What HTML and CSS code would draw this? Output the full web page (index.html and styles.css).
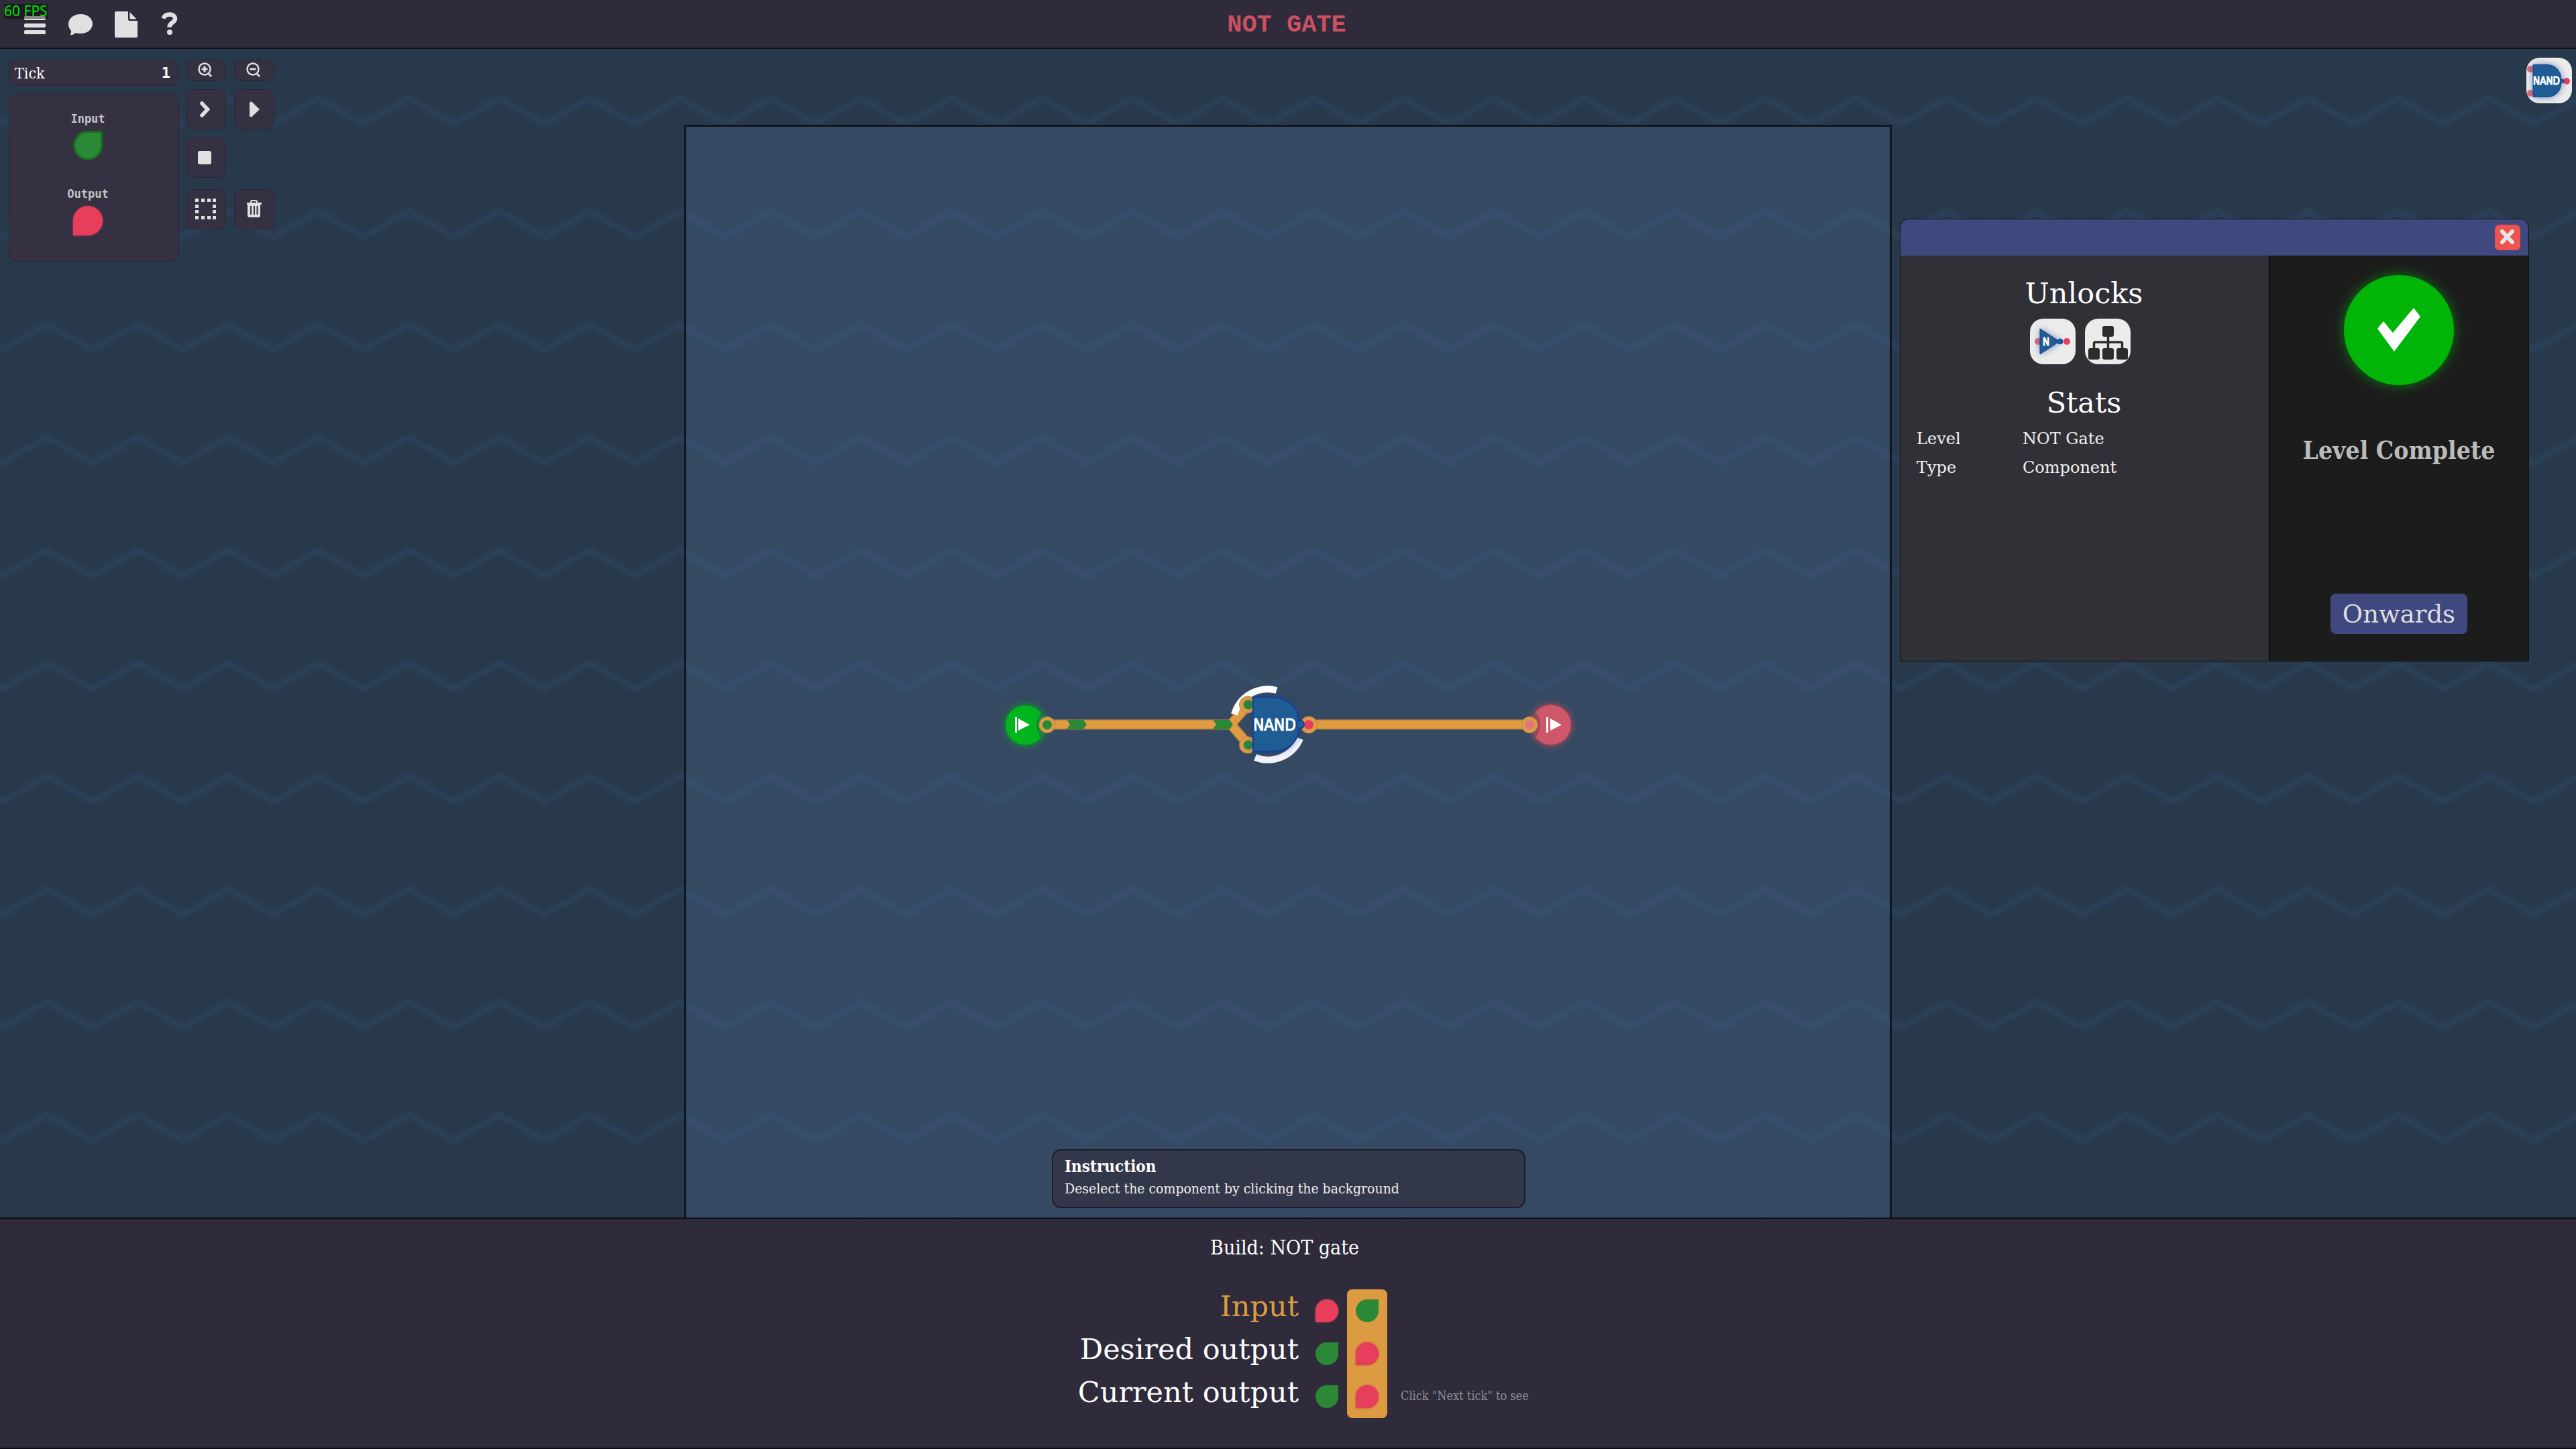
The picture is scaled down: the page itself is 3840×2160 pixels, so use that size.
FILE: index.html
```html
<!DOCTYPE html>
<html lang="en">
<head>
<meta charset="utf-8">
<title>NOT Gate</title>
<link rel="stylesheet" href="styles.css">
</head>
<body>
<header class="topbar">
  <nav class="menu" aria-label="Main">
    <button class="icon-btn" aria-label="Menu"><svg width="34" height="40" viewBox="0 0 34 40"><g fill="#e0e0e0"><rect x="1" y="7" width="32" height="6" rx="2"/><rect x="1" y="18" width="32" height="6" rx="2"/><rect x="1" y="28" width="32" height="6" rx="2"/></g></svg></button>
    <button class="icon-btn" aria-label="Chat"><svg width="38" height="40" viewBox="0 0 38 40"><path fill="#e0e0e0" d="M19 4C9 4 1 10.500 1 19c0 4 1.500 7 4 9.500C5 31 4.500 33.500 4 35.500c3 0 6-2 7.500-3.500 2 .7 4.700 1 7.500 1 10 0 18-6 18-14.500S29 4 19 4z"/></svg></button>
    <button class="icon-btn" aria-label="Notes"><svg width="36" height="40" viewBox="0 0 36 40"><path fill="#e0e0e0" d="M3 0H20V12q0 2 2 2H34V37q0 2-2 2H2q-2 0-2-2V2Q0 0 2 0zM22.500 1L32.500 11.500H22.500z"/></svg></button>
    <button class="icon-btn" aria-label="Help"><svg width="26" height="40" viewBox="0 0 26 40"><path fill="none" stroke="#e0e0e0" stroke-width="6.500" d="M4.500 10.500C6 6 9.500 4.500 14 4.500c5 0 8 2.800 8 6.500 0 6-8.500 5.500-8.500 12.500"/><circle cx="14" cy="31" r="4" fill="#e0e0e0"/></svg></button>
  </nav>
  <h1 class="level-title">NOT GATE</h1>
</header>
<div class="fps">60 FPS</div>

<main class="stage">
  <svg class="waves" aria-hidden="true">
    <defs>
      <pattern id="zigzag" patternUnits="userSpaceOnUse" x="3" y="0" width="134.800" height="168.400">
        <path d="M-67.400 73.600L0 111.600L67.400 73.600L134.800 111.600L202.200 73.600" fill="none" stroke="#263a4a" stroke-width="34" opacity=".3"/>
        <path d="M-67.400 73.600L0 111.600L67.400 73.600L134.800 111.600L202.200 73.600" fill="none" stroke="#293c52" stroke-width="13"/>
        <path d="M-67.400 73.600L0 111.600L67.400 73.600L134.800 111.600L202.200 73.600" fill="none" stroke="#2b3f57" stroke-width="8"/>
      </pattern>
    </defs>
    <rect width="100%" height="100%" fill="url(#zigzag)"/>
  </svg>
  <div class="board"></div>

  <svg class="circuit" width="880" height="140" viewBox="1480 1010 880 140" role="img" aria-label="Circuit">
    <defs>
      <filter id="glow" x="-50%" y="-50%" width="200%" height="200%"><feGaussianBlur stdDeviation="5"/></filter>
    </defs>
    <g stroke="#b98136" stroke-width="15" fill="none"><path d="M1565 1080H1835L1860 1051M1835 1080L1860 1109M1950 1080H2280"/></g>
    <g stroke="#e09c43" stroke-width="12" fill="none"><path d="M1565 1080H1835L1860 1051M1835 1080L1860 1109M1950 1080H2280"/></g>
    <g fill="#2a8836"><path d="M1590 1073H1615L1620 1080L1615 1087H1590L1595 1080z"/><path d="M1808 1073H1833L1838 1080L1833 1087H1808L1813 1080z"/></g>
    <path d="M1840 1065A52 52 0 0 1 1903 1029" fill="none" stroke="#fff" stroke-width="10"/>
    <path d="M1871 1129A52 52 0 0 0 1938 1101" fill="none" stroke="#f2f3f9" stroke-width="10"/>
    <g fill="#dd9b48" stroke="#bb8542"><circle cx="1860" cy="1050.500" r="12.500"/><circle cx="1860" cy="1110.500" r="12.500"/><circle cx="1951" cy="1080.500" r="12.500"/></g>
    <g fill="#2a8836"><circle cx="1860.500" cy="1050.500" r="7"/><circle cx="1860.500" cy="1110.500" r="7"/></g>
    <circle cx="1951" cy="1080.500" r="7" fill="#e73e5c"/>
    <path d="M1868 1039H1896C1922 1039 1937 1056 1937 1080S1922 1121 1896 1121H1868z" fill="#1c3f90" filter="url(#glow)" opacity=".55"/>
    <path d="M1868 1039.500H1896C1922 1039.500 1937 1056 1937 1080S1922 1120.500 1896 1120.500H1868z" fill="#1f5c94" stroke="#173f95" stroke-width="2"/>
    <circle cx="1938" cy="1080" r="6" fill="#1f5c94" stroke="#173f95" stroke-width="2"/>
    <text class="gate-name" x="1900" y="1089" text-anchor="middle">NAND</text>
    <circle cx="1529" cy="1081" r="31" fill="#00c020" filter="url(#glow)" opacity=".6"/>
    <path d="M1552.500 1063A30 30 0 1 0 1552.500 1099A28 28 0 0 1 1552.500 1063z" fill="#02b41e" stroke="#0b7c1e"/>
    <path d="M1513 1069h3v23h-3zM1518 1071L1535 1080.500L1518 1089z" fill="#fff"/>
    <circle cx="2312" cy="1080.500" r="31" fill="#e8505f" filter="url(#glow)" opacity=".6"/>
    <path d="M2288.500 1062A30 30 0 1 1 2288.500 1099A28 28 0 0 0 2288.500 1062z" fill="#ce5769" stroke="#a83e4c"/>
    <circle cx="2280" cy="1080.500" r="12" fill="#dd9b48" stroke="#bb8542"/><circle cx="2280" cy="1080.500" r="7" fill="#e0777a"/>
    <circle cx="1561" cy="1080.500" r="12" fill="#dd9b48" stroke="#bb8542"/><circle cx="1561" cy="1080.500" r="7" fill="#2a8836"/>
    <path d="M2305 1069h3v23h-3zM2311 1071L2328 1080.500L2311 1089z" fill="#fff"/>
  </svg>

  <section class="tools" aria-label="Simulation">
    <div class="readouts">
      <div class="tick"><span>Tick</span><b>1</b></div>
      <div class="signals">
        <span class="signal-name">Input</span>
        <i class="leaf on large"></i>
        <span class="signal-name second">Output</span>
        <i class="leaf off large"></i>
      </div>
    </div>
    <div class="buttons">
      <button class="tool" aria-label="Zoom in"><svg width="24" height="24" viewBox="0 0 24 24" fill="none" stroke="#dedede"><circle cx="10" cy="10" r="8.500" stroke-width="2.500"/><path stroke-width="3" d="M16 17L20 21M5.500 10h9M10 5.500v9"/></svg></button>
      <button class="tool" aria-label="Zoom out"><svg width="24" height="24" viewBox="0 0 24 24" fill="none" stroke="#dedede"><circle cx="10" cy="10" r="8.500" stroke-width="2.500"/><path stroke-width="3" d="M16 17L20 21M5.500 10h9"/></svg></button>
      <button class="tool" aria-label="Next tick"><svg width="24" height="24" viewBox="0 0 24 24"><path d="M6 3L14.500 12L6 21" fill="none" stroke="#e0e0e0" stroke-width="5.500" stroke-linecap="round"/></svg></button>
      <button class="tool" aria-label="Run"><svg width="24" height="24" viewBox="0 0 24 24"><path d="M5 3q0-3 3-2.500L20 12L8 23.500Q5 24 5 21z" fill="#e0e0e0"/></svg></button>
      <button class="tool" aria-label="Stop"><svg width="24" height="24" viewBox="0 0 24 24"><rect x="0" y="2" width="20" height="20" rx="3" fill="#e0e0e0"/></svg></button>
      <button class="tool row-end" aria-label="Select area"><svg width="32" height="32" viewBox="0 0 32 32" fill="#e0e0e0"><path d="M0 0h5v5H0zM9 0h5v5H9zM18 0h5v5H18zM26 0h5v5H26zM0 9h5v5H0zM26 9h5v5H26zM0 17h5v5H0zM26 17h5v5H26zM0 26h5v5H0zM9 26h5v5H9zM18 26h5v5H18zM26 26h5v5H26z"/></svg></button>
      <button class="tool" aria-label="Delete"><svg width="24" height="28" viewBox="0 0 24 28"><path d="M7 5V3q0-2 2-2h5q2 0 2 2v2" fill="none" stroke="#e0e0e0" stroke-width="2"/><path fill="#e0e0e0" fill-rule="evenodd" d="M1 4H23V7H21V23q0 3-3 3H5q-3 0-3-3V7H1zM6 9v13h2V9zM11 9v13h2V9zM15.500 9v13h2V9z"/></svg></button>
    </div>
  </section>

  <button class="tile" aria-label="NAND component">
    <svg width="68" height="68" viewBox="0 0 68 68">
      <circle cx="6" cy="17" r="5" fill="#dc6e78"/><circle cx="6" cy="53" r="5" fill="#dc6e78"/><circle cx="60" cy="35" r="5" fill="#e73e5c"/>
      <path d="M10 10H30C44 10 53 20 53 35S44 59 30 59H10z" fill="#1c3f90" filter="url(#glow)" opacity=".6"/>
      <path d="M10 10.500H30C44 10.500 52 20 52 35S44 58.500 30 58.500H10z" fill="#1f5c94" stroke="#173f95"/>
      <circle cx="53" cy="35" r="3" fill="#1f5c94" stroke="#173f95"/>
      <text class="tile-name" x="30" y="40" text-anchor="middle">NAND</text>
    </svg>
  </button>

  <section class="dialog" role="dialog" aria-label="Level Complete">
    <div class="dialog-bar"><button class="close" aria-label="Close"><svg width="26" height="26" viewBox="0 0 26 26"><path d="M5 4L20 20M20 4L5 20" stroke="#e6e6e6" stroke-width="6" stroke-linecap="round"/></svg></button></div>
    <div class="dialog-body">
      <div class="details">
        <h2>Unlocks</h2>
        <div class="unlocks">
          <span class="tile"><svg width="68" height="68" viewBox="0 0 68 68">
            <circle cx="12" cy="34" r="5" fill="#dc6e78"/><circle cx="55" cy="34" r="5" fill="#e73e5c"/>
            <path d="M15 15L46 34L15 53z" fill="#1c3f90" filter="url(#glow)" opacity=".6"/>
            <path d="M15 15L44 34L15 53z" fill="#1f5c94" stroke="#173f95"/>
            <circle cx="45" cy="34" r="4" fill="#1f5c94" stroke="#173f95"/>
            <text class="tile-name" x="24" y="40" text-anchor="middle">N</text>
          </svg></span>
          <span class="tile"><svg width="68" height="68" viewBox="0 0 68 68" fill="#2c2c2c">
            <rect x="26" y="11" width="17" height="16" rx="3"/><rect x="5" y="44" width="17" height="17" rx="3"/><rect x="26" y="44" width="17" height="17" rx="3"/><rect x="47" y="44" width="17" height="17" rx="3"/>
            <path d="M34.500 26V45M13.500 45V37q0-2 2-2H53.500q2 0 2 2V45" fill="none" stroke="#2c2c2c" stroke-width="3.500"/>
          </svg></span>
        </div>
        <h2>Stats</h2>
        <dl class="stats"><dt>Level</dt><dd>NOT Gate</dd><dt>Type</dt><dd>Component</dd></dl>
      </div>
      <div class="result">
        <div class="medal"><svg width="66" height="66" viewBox="0 0 66 66"><path fill="#fff" d="M1 31L10 20L24 37L55 0L65 13L26 65z"/></svg></div>
        <h3>Level Complete</h3>
        <button class="onwards">Onwards</button>
      </div>
    </div>
  </section>

  <aside class="instruction"><strong>Instruction</strong><p>Deselect the component by clicking the background</p></aside>
</main>

<footer class="goal">
  <h2>Build: NOT gate</h2>
  <table>
    <tr class="given"><th scope="row">Input</th><td><i class="leaf off"></i></td><td class="current first"><i class="leaf on"></i></td><td class="hint"></td></tr>
    <tr><th scope="row">Desired output</th><td><i class="leaf on"></i></td><td class="current"><i class="leaf off"></i></td><td class="hint"></td></tr>
    <tr><th scope="row">Current output</th><td><i class="leaf on"></i></td><td class="current last"><i class="leaf off"></i></td><td class="hint">Click "Next tick" to see</td></tr>
  </table>
</footer>
</body>
</html>
```
FILE: styles.css
```css
* { box-sizing: border-box; }
body {
  margin: 0;
  min-height: 100vh;
  display: flex;
  flex-direction: column;
  background: #2f2b3b;
  color: #fff;
  font-family: "DejaVu Serif", serif;
}
h1, h2, h3, p, dl, dd { margin: 0; font-weight: normal; }
button { font: inherit; color: inherit; border: 0; padding: 0; background: none; }
svg { display: block; }

.topbar {
  display: grid;
  grid-template-columns: 1fr auto 1fr;
  align-items: center;
  height: 73px;
  padding: 3px 39px 0 35px;
  border-bottom: 2px solid #0c0c12;
}
.menu { display: flex; gap: 32px; align-items: center; }
.level-title { font: bold 37px/40px "Liberation Mono", monospace; color: #cb5062; }
.fps {
  position: absolute;
  left: 6px;
  top: 6px;
  height: 22px;
  font: 21px/21px "Noto Sans", sans-serif;
  color: #00e400;
  background: rgba(0, 0, 0, .4);
}

.stage {
  position: relative;
  flex: 1;
  display: flex;
  justify-content: space-between;
  align-items: flex-start;
  padding: 13px 6px 0 13px;
  background: #28394b;
  overflow: hidden;
}
.waves { position: absolute; inset: 0; width: 100%; height: 100%; }
.board {
  position: absolute;
  inset: 113px 0 0;
  width: 46.875%;
  margin: 0 auto;
  border: solid #11161c;
  border-width: 3px 3px 0;
  background: rgba(127, 177, 235, .15);
}
.circuit { position: absolute; left: calc(50% - 440px); top: 937px; }
.gate-name { font: 24px "DejaVu Sans Condensed", sans-serif; fill: #fff; stroke: #fff; stroke-width: 1px; }
.tile-name { font: 15px "DejaVu Sans Condensed", sans-serif; fill: #fff; stroke: #fff; stroke-width: 1px; }

.tools { position: relative; display: flex; gap: 10px; padding-top: 3px; }
.readouts { display: flex; flex-direction: column; gap: 12px; width: 254px; }
.tick, .signals, .tool { background: #363142; border: 1px solid #262736; border-radius: 12px; }
.tick { display: flex; justify-content: space-between; align-items: center; height: 39px; padding: 0 12px 0 8px; font: 23px "DejaVu Serif Condensed", "DejaVu Serif", serif; }
.tick b { font: bold 22px "DejaVu Sans Mono", monospace; }
.signals { display: flex; flex-direction: column; align-items: center; gap: 8px; height: 250px; padding: 26px 18px 0 0; }
.signal-name { font: bold 17px/20px "DejaVu Sans Mono", monospace; color: #c4c4c6; }
.second { margin-top: 32px; }
.buttons { display: grid; grid-template-columns: 60px 60px; grid-template-rows: 32px 60px 60px 60px; gap: 12px; }
.tool { display: flex; align-items: center; justify-content: center; }
.row-end { grid-column: 1; }
.buttons .tool:nth-child(n+6) { margin-top: 5px; margin-bottom: -5px; }

.leaf { display: block; width: 34px; height: 34px; }
.on { background: #2a8836; border-radius: 50% 0 50% 50%; }
.off { background: #e73e5c; border-radius: 50% 50% 50% 0; box-shadow: 0 0 3px #c03850; }
.large { width: 44px; height: 44px; }
.on.large { border: 3px solid #156f1e; }

.tile { position: relative; width: 68px; height: 68px; border-radius: 20px; background: #ebebeb; overflow: hidden; }

.dialog {
  position: absolute;
  right: 70px;
  top: 253px;
  width: 938px;
  border: 1px solid #111;
  border-radius: 14px 14px 0 0;
  overflow: hidden;
}
.dialog-bar { display: flex; justify-content: flex-end; align-items: center; height: 54px; padding: 0 12px; background: #40497f; }
.close { display: grid; place-items: center; width: 38px; height: 38px; border-radius: 7px; background: #ef5350; }
.dialog-body { display: flex; min-height: 604px; }
.details { flex: 1; padding: 28px 26px 0 24px; background: #323037; border-right: 1px solid #000; }
.details h2 { font-size: 43px; line-height: 56px; text-align: center; }
.unlocks { display: flex; justify-content: center; gap: 14px; padding: 10px 12px 29px 0; }
.stats { display: grid; grid-template-columns: 158px 1fr; padding-top: 5px; font-size: 24px; line-height: 43px; color: #f0f0f0; }
.result { display: flex; flex-direction: column; align-items: center; width: 386px; padding: 29px 0 40px; background: #1c1c1c; }
.medal { display: grid; place-items: center; width: 164px; height: 164px; border-radius: 50%; background: #00b507; box-shadow: 0 0 18px rgba(0, 190, 10, .6); }
.result h3 { margin-top: 72px; font: bold 37px/50px "DejaVu Serif Condensed", "DejaVu Serif", serif; color: #bbb; }
.onwards { margin-top: auto; height: 60px; padding: 0 18px; border-radius: 8px; background: #40497f; color: #dedede; font-size: 37px; }

.instruction {
  position: absolute;
  left: calc(50% - 352px);
  bottom: 14px;
  width: 706px;
  height: 88px;
  padding: 8px 17px;
  border: 2px solid #1b1e28;
  border-radius: 14px;
  background: #33374a;
  font: 21px/32px "DejaVu Serif Condensed", "DejaVu Serif", serif;
}
.instruction strong { font-size: 24px; font-weight: bold; }
.instruction p { color: #eee; }

.goal { border: solid #0c0c12; border-width: 2px 0; padding: 20px 0 44px; }
.goal h2 { font: 30px/46px "DejaVu Serif Condensed", "DejaVu Serif", serif; text-align: center; padding-right: 10px; }
.goal table { width: 768px; margin: 39px auto 0; table-layout: fixed; border-collapse: separate; border-spacing: 0; }
.goal tr { height: 64px; }
.goal th { width: 412px; padding: 0 12px 14px 0; font-size: 43px; font-weight: normal; line-height: 50px; text-align: right; white-space: nowrap; }
.goal td { width: 60px; padding: 0 13px; }
.goal .given th { color: #dd9b41; }
.goal .current { background: #dd9b41; }
.goal .first { border-radius: 8px 8px 0 0; }
.goal .last { border-radius: 0 0 8px 8px; }
.goal .hint { width: 236px; padding: 0 0 4px 20px; font: 18px "DejaVu Serif Condensed", "DejaVu Serif", serif; color: #918f97; white-space: nowrap; }
```
